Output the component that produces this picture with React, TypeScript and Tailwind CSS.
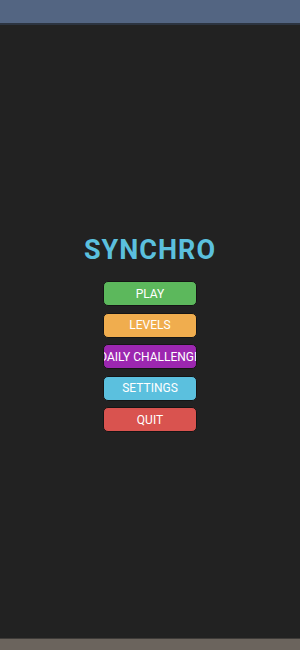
import React from "react";

const buttons = [
  { label: "PLAY", cls: "bg-[#5cb85c]" },
  { label: "LEVELS", cls: "bg-[#f0ad4e]" },
  { label: "DAILY CHALLENGE", cls: "bg-[#9c27b0]" },
  { label: "SETTINGS", cls: "bg-[#5bc0de]" },
  { label: "QUIT", cls: "bg-[#d9534f]" },
];

export default function App() {
  return (
    <div className="w-[300px] h-[650px] flex flex-col bg-[#222222] overflow-hidden" style={{ fontFamily: "Roboto, 'Liberation Sans', sans-serif" }}>
      <div className="h-[25px] shrink-0 bg-[#536582] border-b-2 border-[#2c3440]" />
      <div className="flex-1 flex flex-col items-center pt-[210px]">
        <div className="text-[27px] leading-[30px] font-bold text-[#5bc0de] tracking-[1px]">SYNCHRO</div>
        <div className="flex flex-col gap-[6.5px] mt-[16px]">
          {buttons.map((b) => (
            <div
              key={b.label}
              className={`w-[94px] h-[25px] rounded-[5px] border border-[#151515] ${b.cls} text-white text-[12px] flex items-center justify-center whitespace-nowrap overflow-hidden`}
            >
              {b.label}
            </div>
          ))}
        </div>
      </div>
      <div className="h-[12px] shrink-0 bg-[#6b645d] border-t border-[#3f3c39]" />
    </div>
  );
}
